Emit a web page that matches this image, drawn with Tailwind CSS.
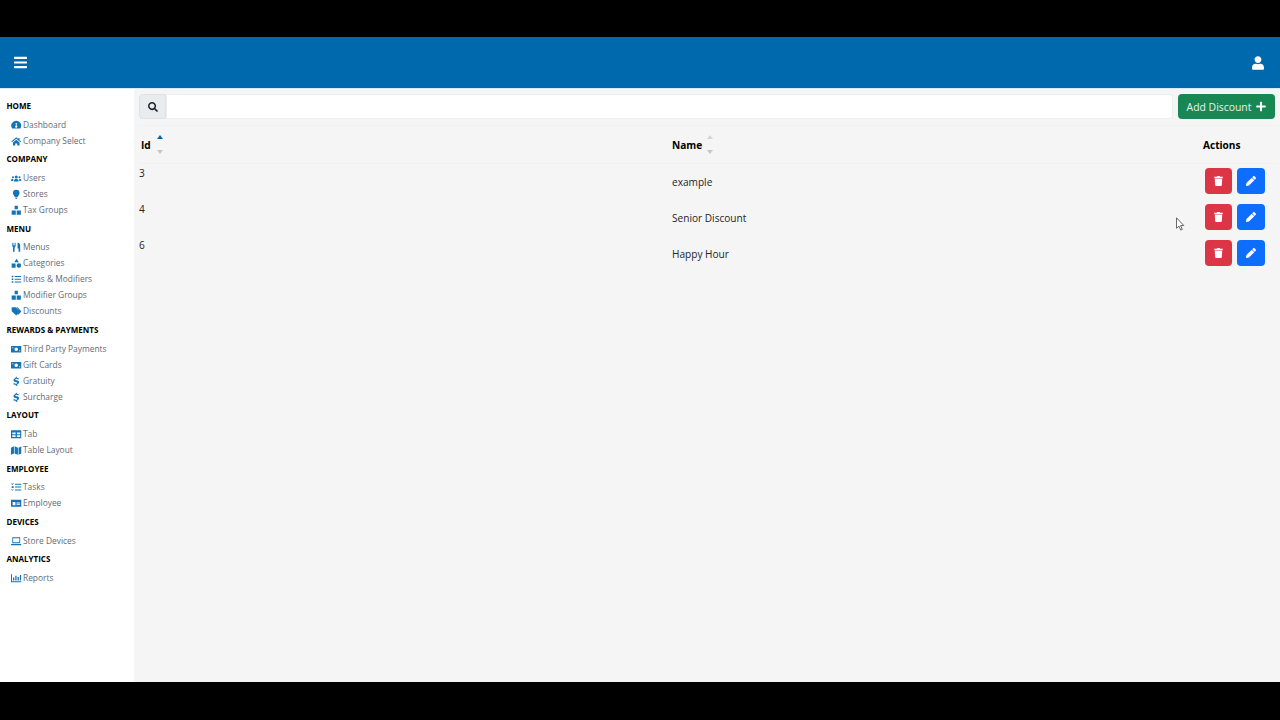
<!DOCTYPE html>
<html lang="en">
<head>
    <meta charset="UTF-8">
    <meta name="viewport" content="width=device-width, initial-scale=1.0">
    <title>Discounts</title>
    <script src="https://cdn.jsdelivr.net/npm/@tailwindcss/browser@4"></script>
</head>
<body class="bg-black h-[720px] overflow-hidden font-['Open_Sans',sans-serif]">
    <svg class="hidden">
        <defs>
            <symbol id="i-gauge" viewBox="0 0 16 16"><path fill-rule="evenodd" d="M8 1a7.500 7.500 0 0 0-6.500 11.500c.3.4.6.5 1 .5h11c.4 0 .7-.1 1-.5A7.500 7.500 0 0 0 8 1zm.9 3.500L8.600 8.700a1.600 1.600 0 1 1-1.200 0L7.100 4.500z"/></symbol>
            <symbol id="i-home" viewBox="0 0 16 16"><path d="M8 2 .5 8.500l1 1L8 4l6.500 5.500 1-1L13 6.300V3h-2v1.600zM3 10v4.500h3.500v-3h3v3H13V10L8 5.700z"/></symbol>
            <symbol id="i-users" viewBox="0 0 16 16"><circle cx="8" cy="6" r="2.300"/><circle cx="3" cy="6.500" r="1.600"/><circle cx="13" cy="6.500" r="1.600"/><path d="M4.500 13v-1.500C4.500 10 6 9 8 9s3.500 1 3.500 2.500V13zM0 12v-1.500C0 9.500 1.200 9 3.500 9L3.400 12zM16 12v-1.500c0-1-1.200-1.500-3.500-1.500l.1 3z"/></symbol>
            <symbol id="i-pin" viewBox="0 0 16 16"><path d="M8 1a5 5 0 0 0-5 5c0 2.500 2.500 5 3.500 6.500h3C10.500 11 13 8.500 13 6a5 5 0 0 0-5-5zM6.500 13.500h3V15h-3z"/></symbol>
            <symbol id="i-boxes" viewBox="0 0 16 16"><path d="M5.500 1h5v5.500h-5zM1 8.500h6.300V15H1zM8.700 8.500H15V15H8.700z"/></symbol>
            <symbol id="i-food" viewBox="0 0 16 16"><path d="M2 1h1v4h1V1h1v4h1V1h1v5c0 1-.7 1.800-1.500 2v7h-2.500V8C2.700 7.800 2 7 2 6zM10 1c2.500 0 4 1.500 4 4.500V15h-2.500v-5H10z"/></symbol>
            <symbol id="i-shapes" viewBox="0 0 16 16"><path d="M8.500 1 12 6.500H5zM12 8a3.500 3.500 0 1 1 0 7 3.500 3.500 0 0 1 0-7zM1 8.500h6V15H1z"/></symbol>
            <symbol id="i-list" viewBox="0 0 16 16"><path d="M1 2.500h2.500V5H1zM5.500 3h10v1.500h-10zM1 6.800h2.500v2.500H1zM5.500 7.300h10v1.500h-10zM1 11h2.500v2.500H1zM5.500 11.500h10V13h-10z"/></symbol>
            <symbol id="i-tags" viewBox="0 0 16 16"><path d="M1 2h6l7 6.500L8 14.500 1 8zM10 2l6 6.500-5 5-1-1 4-4L8 2z"/></symbol>
            <symbol id="i-money" viewBox="0 0 16 16"><path fill-rule="evenodd" d="M0 3h16v10H0zm8 2.300a2.700 2.700 0 1 0 0 5.400 2.700 2.700 0 0 0 0-5.400zM2 5v1.500h1.500V5zm10.500 4.500V11H14V9.500z"/></symbol>
            <symbol id="i-dollar" viewBox="0 0 16 16"><path d="M7.200 1h1.600v1.600c1.300.1 2.400.6 3.200 1.200l-.9 1.400c-.9-.6-1.800-1-2.900-1-1 0-1.700.4-1.700 1s.6.9 2.400 1.300c2.200.6 3.400 1.400 3.400 3.100 0 1.600-1.200 2.600-2.700 2.900V15H7.200v-1.500c-1.400-.1-2.700-.7-3.700-1.500l1-1.400c1 .8 2 1.200 3.200 1.200s1.900-.4 1.900-1.100-.6-1-2.400-1.500C5 8.700 3.800 7.900 3.800 6.300c0-1.500 1.200-2.500 3.400-3.700z"/></symbol>
            <symbol id="i-table" viewBox="0 0 16 16"><path fill-rule="evenodd" d="M0 2h16v12H0zm2 3.500v2.500h5V5.500zm7 0v2.500h5V5.500zM2 9.500V12h5V9.500zm7 0V12h5V9.500z"/></symbol>
            <symbol id="i-map" viewBox="0 0 16 16"><path d="M0 4l4.500-2v11L0 15zM5.500 2l5 2v11l-5-2zM11.500 4 16 2v11l-4.500 2z"/></symbol>
            <symbol id="i-tasks" viewBox="0 0 16 16"><path d="M1 2l1 1 1.500-1.500.7.700L2 4.500.3 2.700zM6 2.500h10V4H6zM1 6.500h3V9H1zM6 7h10v1.500H6zM1 11l1 1 1.500-1.500.7.700L2 13.500.3 11.700zM6 11.500h10V13H6z"/></symbol>
            <symbol id="i-badge" viewBox="0 0 16 16"><path fill-rule="evenodd" d="M0 2.500h16v11H0zM2.500 6v5h4.200V6zm5.800 1v1.200h5.500V7zm0 2.500v1.200h5.500V9.500z"/></symbol>
            <symbol id="i-laptop" viewBox="0 0 16 16"><path fill-rule="evenodd" d="M2 2h12v9H2zm1.300 1.300v6.400h9.400V3.300zM0 12h16v1c0 .6-.4 1-1 1H1c-.6 0-1-.4-1-1z"/></symbol>
            <symbol id="i-chart" viewBox="0 0 16 16"><path d="M0 2h1.500v10.500H16V14H0zM3 7h2v4.500H3zM6.500 4h2v7.500h-2zM10 6h2v5.500h-2zM13.500 3h2v8.500h-2z"/></symbol>
            <symbol id="i-trash" viewBox="0 0 448 512"><path d="M432 32H312l-9.400-18.700A24 24 0 0 0 281.100 0H166.800a23.720 23.720 0 0 0-21.400 13.300L136 32H16A16 16 0 0 0 0 48v32a16 16 0 0 0 16 16h416a16 16 0 0 0 16-16V48a16 16 0 0 0-16-16zM53.200 467a48 48 0 0 0 47.900 45h245.800a48 48 0 0 0 47.900-45L416 128H32z"/></symbol>
            <symbol id="i-pencil" viewBox="0 0 512 512"><path d="M497.900 142.100l-46.100 46.100c-4.700 4.700-12.300 4.700-17 0l-111-111c-4.700-4.700-4.700-12.300 0-17l46.100-46.100c18.700-18.700 49.100-18.700 67.900 0l60.100 60.100c18.800 18.700 18.800 49.100 0 67.900zM284.200 99.800L21.600 362.400.4 483.900c-2.900 16.400 11.400 30.600 27.800 27.800l121.500-21.300 262.600-262.600c4.700-4.700 4.700-12.300 0-17l-111-111c-4.800-4.700-12.400-4.700-17.100 0z"/></symbol>
        </defs>
    </svg>

    <!-- top letterbox -->
    <div class="h-[37px] bg-black"></div>

    <div class="relative h-[645px] flex flex-col bg-[#f5f5f5]">
        <!-- Header -->
        <header class="h-[52px] shrink-0 bg-[#0069ae] border-b border-[#dbe9f3] flex items-center justify-between pl-[14px] pr-[16px] text-white">
            <svg class="w-[13px] h-[15px] fill-current" viewBox="0 0 448 512"><path d="M16 132h416c8.837 0 16-7.163 16-16V76c0-8.837-7.163-16-16-16H16C7.163 60 0 67.163 0 76v40c0 8.837 7.163 16 16 16zm0 160h416c8.837 0 16-7.163 16-16v-40c0-8.837-7.163-16-16-16H16c-8.837 0-16 7.163-16 16v40c0 8.837 7.163 16 16 16zm0 160h416c8.837 0 16-7.163 16-16v-40c0-8.837-7.163-16-16-16H16c-8.837 0-16 7.163-16 16v40c0 8.837 7.163 16 16 16z"/></svg>
            <svg class="w-[12px] h-[14px] fill-current" viewBox="0 0 448 512"><path d="M224 256c70.700 0 128-57.300 128-128S294.700 0 224 0 96 57.300 96 128s57.300 128 128 128zm89.600 32h-16.700c-22.200 10.200-46.900 16-72.900 16s-50.600-5.800-72.900-16h-16.700C60.200 288 0 348.200 0 422.400V464c0 26.500 21.500 48 48 48h352c26.500 0 48-21.500 48-48v-41.600c0-74.200-60.200-134.400-134.400-134.400z"/></svg>
        </header>

        <div class="flex flex-1 min-h-0">
            <!-- Sidebar -->
            <aside class="w-[134px] shrink-0 bg-white pt-[6.800px] pl-[6.500px] text-[8.400px] text-[#5f6b76]">
                <h3 class="mt-[2.300px] mb-[3px] h-4 leading-4 text-[8px] font-bold text-black">HOME</h3>
                <a class="flex items-center h-4 pl-[4.500px]"><svg class="w-[10.500px] h-[10.500px] mr-[1.500px] fill-[#1474b8]"><use href="#i-gauge"/></svg>Dashboard</a>
                <a class="flex items-center h-4 pl-[4.500px]"><svg class="w-[10.500px] h-[10.500px] mr-[1.500px] fill-[#1474b8]"><use href="#i-home"/></svg>Company Select</a>

                <h3 class="mt-[2.300px] mb-[3px] h-4 leading-4 text-[8px] font-bold text-black">COMPANY</h3>
                <a class="flex items-center h-4 pl-[4.500px]"><svg class="w-[10.500px] h-[10.500px] mr-[1.500px] fill-[#1474b8]"><use href="#i-users"/></svg>Users</a>
                <a class="flex items-center h-4 pl-[4.500px]"><svg class="w-[10.500px] h-[10.500px] mr-[1.500px] fill-[#1474b8]"><use href="#i-pin"/></svg>Stores</a>
                <a class="flex items-center h-4 pl-[4.500px]"><svg class="w-[10.500px] h-[10.500px] mr-[1.500px] fill-[#1474b8]"><use href="#i-boxes"/></svg>Tax Groups</a>

                <h3 class="mt-[2.300px] mb-[3px] h-4 leading-4 text-[8px] font-bold text-black">MENU</h3>
                <a class="flex items-center h-4 pl-[4.500px]"><svg class="w-[10.500px] h-[10.500px] mr-[1.500px] fill-[#1474b8]"><use href="#i-food"/></svg>Menus</a>
                <a class="flex items-center h-4 pl-[4.500px]"><svg class="w-[10.500px] h-[10.500px] mr-[1.500px] fill-[#1474b8]"><use href="#i-shapes"/></svg>Categories</a>
                <a class="flex items-center h-4 pl-[4.500px]"><svg class="w-[10.500px] h-[10.500px] mr-[1.500px] fill-[#1474b8]"><use href="#i-list"/></svg>Items &amp; Modifiers</a>
                <a class="flex items-center h-4 pl-[4.500px]"><svg class="w-[10.500px] h-[10.500px] mr-[1.500px] fill-[#1474b8]"><use href="#i-boxes"/></svg>Modifier Groups</a>
                <a class="flex items-center h-4 pl-[4.500px]"><svg class="w-[10.500px] h-[10.500px] mr-[1.500px] fill-[#1474b8]"><use href="#i-tags"/></svg>Discounts</a>

                <h3 class="mt-[2.300px] mb-[3px] h-4 leading-4 text-[8px] font-bold text-black">REWARDS &amp; PAYMENTS</h3>
                <a class="flex items-center h-4 pl-[4.500px]"><svg class="w-[10.500px] h-[10.500px] mr-[1.500px] fill-[#1474b8]"><use href="#i-money"/></svg>Third Party Payments</a>
                <a class="flex items-center h-4 pl-[4.500px]"><svg class="w-[10.500px] h-[10.500px] mr-[1.500px] fill-[#1474b8]"><use href="#i-money"/></svg>Gift Cards</a>
                <a class="flex items-center h-4 pl-[4.500px]"><svg class="w-[10.500px] h-[10.500px] mr-[1.500px] fill-[#1474b8]"><use href="#i-dollar"/></svg>Gratuity</a>
                <a class="flex items-center h-4 pl-[4.500px]"><svg class="w-[10.500px] h-[10.500px] mr-[1.500px] fill-[#1474b8]"><use href="#i-dollar"/></svg>Surcharge</a>

                <h3 class="mt-[2.300px] mb-[3px] h-4 leading-4 text-[8px] font-bold text-black">LAYOUT</h3>
                <a class="flex items-center h-4 pl-[4.500px]"><svg class="w-[10.500px] h-[10.500px] mr-[1.500px] fill-[#1474b8]"><use href="#i-table"/></svg>Tab</a>
                <a class="flex items-center h-4 pl-[4.500px]"><svg class="w-[10.500px] h-[10.500px] mr-[1.500px] fill-[#1474b8]"><use href="#i-map"/></svg>Table Layout</a>

                <h3 class="mt-[2.300px] mb-[3px] h-4 leading-4 text-[8px] font-bold text-black">EMPLOYEE</h3>
                <a class="flex items-center h-4 pl-[4.500px]"><svg class="w-[10.500px] h-[10.500px] mr-[1.500px] fill-[#1474b8]"><use href="#i-tasks"/></svg>Tasks</a>
                <a class="flex items-center h-4 pl-[4.500px]"><svg class="w-[10.500px] h-[10.500px] mr-[1.500px] fill-[#1474b8]"><use href="#i-badge"/></svg>Employee</a>

                <h3 class="mt-[2.300px] mb-[3px] h-4 leading-4 text-[8px] font-bold text-black">DEVICES</h3>
                <a class="flex items-center h-4 pl-[4.500px]"><svg class="w-[10.500px] h-[10.500px] mr-[1.500px] fill-[#1474b8]"><use href="#i-laptop"/></svg>Store Devices</a>

                <h3 class="mt-[2.300px] mb-[3px] h-4 leading-4 text-[8px] font-bold text-black">ANALYTICS</h3>
                <a class="flex items-center h-4 pl-[4.500px]"><svg class="w-[10.500px] h-[10.500px] mr-[1.500px] fill-[#1474b8]"><use href="#i-chart"/></svg>Reports</a>
            </aside>

            <!-- Main -->
            <main class="flex-1 min-w-0 pt-[5px] pl-[5px] pr-[5px] text-[10.100px] text-[#212529]">
                <div class="flex items-stretch h-[25px]">
                    <div class="w-[27px] bg-[#e9ecef] border border-[#dee2e6] rounded-l flex items-center justify-center">
                        <svg class="w-[10px] h-[10px] fill-[#212529]" viewBox="0 0 512 512"><path d="M505 442.700L405.300 343c-4.500-4.500-10.600-7-17-7H372c27.600-35.300 44-79.700 44-128C416 93.100 322.900 0 208 0S0 93.100 0 208s93.100 208 208 208c48.300 0 92.700-16.400 128-44v16.300c0 6.400 2.500 12.500 7 17l99.700 99.700c9.400 9.400 24.600 9.400 33.900 0l28.300-28.300c9.400-9.400 9.400-24.600.1-34zM208 336c-70.700 0-128-57.200-128-128 0-70.700 57.200-128 128-128 70.700 0 128 57.200 128 128 0 70.700-57.200 128-128 128z"/></svg>
                    </div>
                    <div class="w-[1007px] bg-white border border-[#eceef0] rounded-r"></div>
                    <button class="ml-[5px] w-[97px] bg-[#198754] rounded text-[#e8f3ee] flex items-center justify-center gap-[5px] text-[10.400px]">
                        <span class="pt-[2px]">Add Discount</span>
                        <svg class="w-[10px] h-[11px] fill-white" viewBox="0 0 448 512"><path d="M416 208H272V64c0-17.670-14.330-32-32-32h-32c-17.670 0-32 14.330-32 32v144H32c-17.670 0-32 14.330-32 32v32c0 17.670 14.330 32 32 32h144v144c0 17.670 14.330 32 32 32h32c17.670 0 32-14.330 32-32V304h144c17.670 0 32-14.330 32-32v-32c0-17.670-14.330-32-32-32z"/></svg>
                    </button>
                </div>

                <!-- Table -->
                <div class="mt-[6px] -mr-[3px]">
                    <div class="flex h-[39px] items-center border-y border-[#f0f1f2]">
                        <div class="w-[533px] pl-[2px] flex items-center font-bold text-black">
                            <span class="pt-[2px]">Id</span>
                            <span class="ml-[6px] flex flex-col gap-[11px]">
                                <span class="w-0 h-0 border-x-[3.500px] border-x-transparent border-b-[4px] border-b-[#0069ae]"></span>
                                <span class="w-0 h-0 border-x-[3.500px] border-x-transparent border-t-[4px] border-t-[#c4c8cc]"></span>
                            </span>
                        </div>
                        <div class="flex-1 flex items-center font-bold text-black">
                            <span class="pt-[2px]">Name</span>
                            <span class="ml-[5px] flex flex-col gap-[11px]">
                                <span class="w-0 h-0 border-x-[3.500px] border-x-transparent border-b-[4px] border-b-[#d4d7da]"></span>
                                <span class="w-0 h-0 border-x-[3.500px] border-x-transparent border-t-[4px] border-t-[#c4c8cc]"></span>
                            </span>
                        </div>
                        <div class="w-[75px] pt-[2px] font-bold text-black">Actions</div>
                    </div>

                    <div class="flex h-9">
                        <div class="w-[533px] pt-[2px]">3</div>
                        <div class="flex-1 flex items-center pt-[2px]">example</div>
                        <div class="w-[73px] flex items-center gap-[5px] pb-[2px]">
                            <button class="w-[27px] h-[26px] bg-[#dc3545] rounded flex items-center justify-center"><svg class="w-[9px] h-[10px] fill-white"><use href="#i-trash"/></svg></button>
                            <button class="w-[28px] h-[26px] bg-[#0d6efd] rounded flex items-center justify-center"><svg class="w-[10px] h-[10px] fill-white"><use href="#i-pencil"/></svg></button>
                        </div>
                    </div>
                    <div class="flex h-9">
                        <div class="w-[533px] pt-[2px]">4</div>
                        <div class="flex-1 flex items-center pt-[2px]">Senior Discount</div>
                        <div class="w-[73px] flex items-center gap-[5px] pb-[2px]">
                            <button class="w-[27px] h-[26px] bg-[#dc3545] rounded flex items-center justify-center"><svg class="w-[9px] h-[10px] fill-white"><use href="#i-trash"/></svg></button>
                            <button class="w-[28px] h-[26px] bg-[#0d6efd] rounded flex items-center justify-center"><svg class="w-[10px] h-[10px] fill-white"><use href="#i-pencil"/></svg></button>
                        </div>
                    </div>
                    <div class="flex h-9">
                        <div class="w-[533px] pt-[2px]">6</div>
                        <div class="flex-1 flex items-center pt-[2px]">Happy Hour</div>
                        <div class="w-[73px] flex items-center gap-[5px] pb-[2px]">
                            <button class="w-[27px] h-[26px] bg-[#dc3545] rounded flex items-center justify-center"><svg class="w-[9px] h-[10px] fill-white"><use href="#i-trash"/></svg></button>
                            <button class="w-[28px] h-[26px] bg-[#0d6efd] rounded flex items-center justify-center"><svg class="w-[10px] h-[10px] fill-white"><use href="#i-pencil"/></svg></button>
                        </div>
                    </div>
                </div>
            </main>
        </div>

        <!-- mouse pointer -->
        <svg class="absolute left-[1176px] top-[180px] w-[9px] h-[14px]" viewBox="0 0 9 14"><path d="M.5.8v10.500l2.500-2.200 1.700 4 1.600-.7-1.700-3.900h3.200z" fill="#fff" stroke="#444" stroke-width=".8"/></svg>
    </div>
</body>
</html>
